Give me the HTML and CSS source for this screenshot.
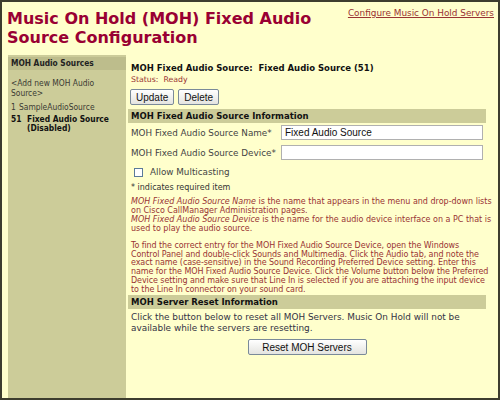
FILE: index.html
```html
<!DOCTYPE html>
<html>
<head>
<meta charset="utf-8">
<link rel="stylesheet" href="styles.css">
</head>
<body>
<div class="page">
  <div class="top">
    <h1 class="title">Music On Hold (MOH) Fixed Audio Source Configuration</h1>
    <a class="toplink" href="#">Configure Music On Hold Servers</a>
  </div>
  <div class="content">
    <aside class="side">
      <div class="side-head">MOH Audio Sources</div>
      <div class="side-add">&lt;Add new MOH Audio Source&gt;</div>
      <div class="side-item"><span class="num short">1</span><span>SampleAudioSource</span></div>
      <div class="side-item current"><span class="num">51</span><span>Fixed Audio Source (Disabled)</span></div>
    </aside>
    <main class="main">
      <div class="heading">MOH Fixed Audio Source:&nbsp; Fixed Audio Source (51)</div>
      <div class="status">Status:&nbsp; Ready</div>
      <div class="buttons">
        <button class="btn">Update</button>
        <button class="btn">Delete</button>
      </div>
      <div class="section">MOH Fixed Audio Source Information</div>
      <div class="row">
        <label class="label">MOH Fixed Audio Source Name*</label>
        <input class="field" type="text" value="Fixed Audio Source">
      </div>
      <div class="row">
        <label class="label">MOH Fixed Audio Source Device*</label>
        <input class="field" type="text" value="">
      </div>
      <div class="check"><span class="box"></span>Allow Multicasting</div>
      <div class="req">* indicates required item</div>
      <p class="note first"><i>MOH Fixed Audio Source Name</i> is the name that appears in the menu and drop-down lists on Cisco CallManager Administration pages.<br><i>MOH Fixed Audio Source Device</i> is the name for the audio device interface on a PC that is used to play the audio source.</p>
      <p class="note second">To find the correct entry for the MOH Fixed Audio Source Device, open the Windows<br>Control Panel and double-click Sounds and Multimedia. Click the Audio tab, and note the<br>exact name (case-sensitive) in the Sound Recording Preferred Device setting. Enter this<br>name for the MOH Fixed Audio Source Device. Click the Volume button below the Preferred<br>Device setting and make sure that Line In is selected if you are attaching the input device<br>to the Line In connector on your sound card.</p>
      <div class="section second">MOH Server Reset Information</div>
      <p class="reset-text">Click the button below to reset all MOH Servers. Music On Hold will not be available while the servers are resetting.</p>
      <div class="center"><button class="btn wide">Reset MOH Servers</button></div>
    </main>
  </div>
</div>
</body>
</html>
```

FILE: styles.css
```css
html, body {
  margin: 0;
  padding: 0;
}
body {
  font-family: "DejaVu Sans", Verdana, sans-serif;
  color: #333;
  background: #ffffcc;
}
.page {
  box-sizing: border-box;
  width: 500px;
  height: 400px;
  border: 2px solid #3d3d2e;
  background: #ffffcc;
  display: flex;
  flex-direction: column;
  overflow: hidden;
}
.top {
  display: flex;
  justify-content: space-between;
  align-items: flex-start;
  padding: 7px 4px 0 5px;
  height: 53px;
  box-sizing: border-box;
  flex: none;
}
.title {
  margin: 0;
  font-size: 16px;
  line-height: 19px;
  font-weight: bold;
  color: #990033;
  width: 330px;
}
.toplink {
  font-size: 8.9px;
  color: #993333;
  margin-top: -1px;
  white-space: nowrap;
}
.content {
  flex: 1;
  display: flex;
  padding-left: 6px;
  gap: 2px;
  min-height: 0;
}
.side {
  width: 118px;
  background: #cccc99;
  font-family: "DejaVu Sans Condensed", "DejaVu Sans", sans-serif;
  font-size: 8.4px;
  color: #3a3a33;
}
.side-head {
  background: #bdbd8c;
  font-weight: bold;
  font-size: 8.3px;
  color: #222;
  padding: 2px 3px;
  line-height: 9px;
  margin-top: 2px;
}
.side-add {
  padding: 8px 3px 0;
  line-height: 10px;
}
.side-item {
  display: flex;
  padding: 5px 3px 0;
  line-height: 9px;
}
.side-item + .side-item {
  padding-top: 3px;
}
.side-item .num {
  width: 16px;
  flex: none;
}
.side-item .num.short {
  width: 8px;
}
.side-item.current {
  font-weight: bold;
  color: #111;
}
.main {
  width: 358px;
  padding-top: 7px;
}
.heading {
  font-weight: bold;
  font-size: 8.5px;
  color: #111;
  padding-left: 3px;
  line-height: 12px;
}
.status {
  font-size: 7.8px;
  color: #993333;
  padding-left: 3px;
  margin-top: 1px;
  line-height: 10px;
}
.buttons {
  display: flex;
  gap: 4px;
  padding-left: 2px;
  margin-top: 4px;
}
.btn {
  font-family: "Liberation Sans", Arial, sans-serif;
  font-size: 10px;
  color: #111;
  height: 16px;
  padding: 0 5px;
  border: 1px solid #7a8a99;
  border-radius: 2px;
  background: linear-gradient(#ffffff, #e4e4e0);
}
.section {
  background: #cccc99;
  font-weight: bold;
  font-size: 8.5px;
  color: #111;
  padding: 2px 3px;
  line-height: 10px;
  margin-top: 4px;
}
.section.second {
  margin-top: 1px;
}
.row {
  display: flex;
  align-items: center;
  justify-content: space-between;
  margin-top: 2px;
  height: 15px;
  padding-left: 3px;
  padding-right: 3px;
}
.row + .row {
  margin-top: 5px;
}
.label {
  font-size: 8.8px;
  color: #444;
}
.field {
  box-sizing: border-box;
  width: 202px;
  height: 15px;
  border: 1px solid #b0b0b0;
  background: #fff;
  font-family: "Liberation Sans", Arial, sans-serif;
  font-size: 10px;
  padding: 0 3px;
  color: #111;
}
.check {
  display: flex;
  align-items: center;
  font-size: 8.8px;
  line-height: 10px;
  color: #444;
  padding-left: 6px;
  margin-top: 7px;
}
.box {
  width: 7px;
  height: 7px;
  border: 1px solid #5b7a99;
  background: #fff;
  margin-right: 7px;
}
.req {
  font-size: 8px;
  line-height: 9px;
  color: #333;
  padding-left: 3px;
  margin-top: 6px;
}
.note {
  font-size: 8px;
  line-height: 8.7px;
  color: #993333;
  margin: 5px -8px 0 0;
  padding-left: 3px;
}
.note.first {
  line-height: 9px;
}
.note.second {
  margin-top: 9px;
  white-space: nowrap;
  letter-spacing: -0.08px;
}
.reset-text {
  font-size: 8.9px;
  line-height: 11px;
  color: #334;
  margin: 3px 0 0;
  padding-left: 3px;
}
.center {
  display: flex;
  justify-content: center;
  margin-top: 5px;
}
.wide {
  width: 119px;
}
```
